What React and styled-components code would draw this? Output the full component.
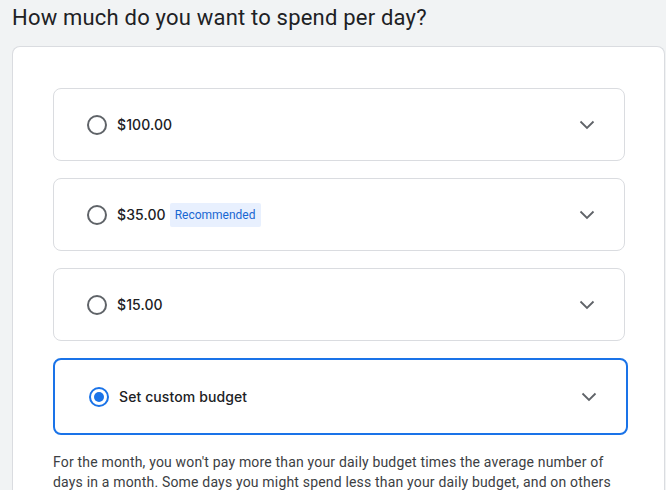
import React from "react";
import styled, { createGlobalStyle } from "styled-components";

const Global = createGlobalStyle`
  html, body { margin: 0; padding: 0; background: #f1f3f4; }
  body { font-family: Roboto, "Liberation Sans", sans-serif; overflow: hidden; }
`;

const Page = styled.div`
  padding: 4px 1px 0 12px;
  height: 490px;
  box-sizing: border-box;
`;

const Title = styled.h1`
  margin: 0;
  font-family: Roboto, "Liberation Sans", sans-serif;
  font-weight: 400;
  font-size: 22px;
  line-height: 28px;
  letter-spacing: 0.2px;
  color: #202124;
`;

const Card = styled.div`
  margin-top: 14px;
  background: #fff;
  border: 1px solid #dadce0;
  border-bottom: none;
  border-radius: 8px 8px 0 0;
  padding: 41px 39px 40px 40px;
  display: flex;
  flex-direction: column;
  gap: 17px;
`;

const Option = styled.div`
  display: flex;
  align-items: center;
  box-sizing: border-box;
  height: ${(p) => (p.$selected ? 77 : 73)}px;
  margin-right: ${(p) => (p.$selected ? -3 : 0)}px;
  border: ${(p) => (p.$selected ? "2px solid #1a73e8" : "1px solid #dadce0")};
  border-radius: 8px;
  padding: 0 29px 0 ${(p) => (p.$selected ? 34 : 33)}px;
  background: #fff;
`;

const Radio = styled.span`
  width: 20px;
  height: 20px;
  box-sizing: border-box;
  border-radius: 50%;
  border: 2px solid ${(p) => (p.$checked ? "#1a73e8" : "#5f6368")};
  display: flex;
  align-items: center;
  justify-content: center;
  flex: none;
  &::after {
    content: "";
    display: ${(p) => (p.$checked ? "block" : "none")};
    width: 10px;
    height: 10px;
    border-radius: 50%;
    background: #1a73e8;
  }
`;

const Label = styled.span`
  margin-left: 10px;
  font-family: Inter, "Open Sans", sans-serif;
  font-weight: 500;
  font-size: 14px;
  color: #202124;
  letter-spacing: 0.1px;
`;

const Badge = styled.span`
  margin-left: 4px;
  background: #e8f0fe;
  color: #1967d2;
  font-family: Roboto, "Liberation Sans", sans-serif;
  font-size: 12px;
  line-height: 24px;
  padding: 0 5px;
  border-radius: 2px;
`;

const Spacer = styled.span`
  flex: 1;
`;

const Chevron = () => (
  <svg width="16" height="10" viewBox="0 0 16 10" fill="none">
    <polyline points="1.5,1.5 8,8 14.5,1.5" stroke="#5f6368" strokeWidth="1.8" />
  </svg>
);

const Help = styled.p`
  margin: 0;
  font-family: Roboto, "Liberation Sans", sans-serif;
  font-size: 14px;
  line-height: 20px;
  letter-spacing: 0.18px;
  color: #3c4043;
`;

const options = [
  { label: "$100.00" },
  { label: "$35.00", badge: "Recommended" },
  { label: "$15.00" },
  { label: "Set custom budget", selected: true },
];

export default function App() {
  return (
    <>
      <Global />
      <Page>
        <Title>How much do you want to spend per day?</Title>
        <Card>
          {options.map((o) => (
            <Option key={o.label} $selected={o.selected}>
              <Radio $checked={o.selected} />
              <Label>{o.label}</Label>
              {o.badge && <Badge>{o.badge}</Badge>}
              <Spacer />
              <Chevron />
            </Option>
          ))}
          <Help>
            For the month, you won't pay more than your daily budget times the average number of
            days in a month. Some days you might spend less than your daily budget, and on others
            you might spend up to twice as much.
          </Help>
        </Card>
      </Page>
    </>
  );
}
